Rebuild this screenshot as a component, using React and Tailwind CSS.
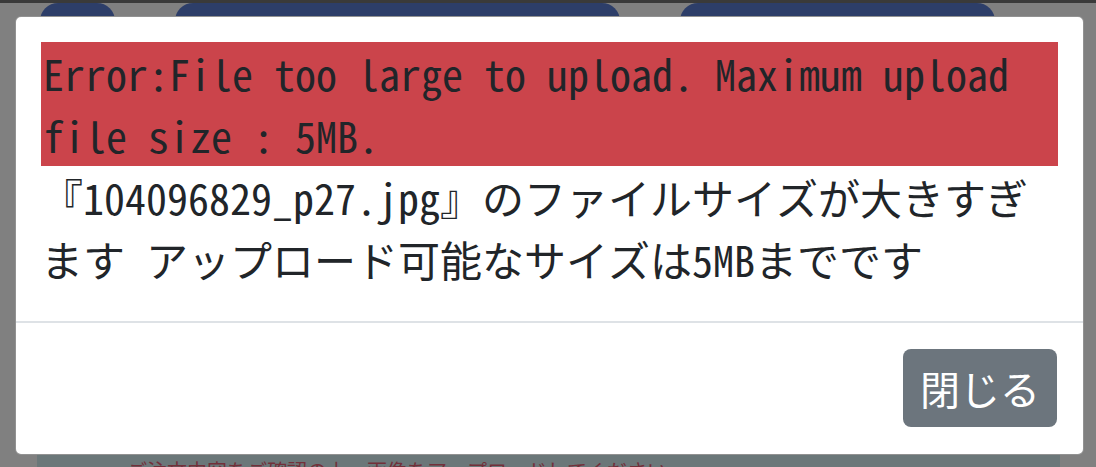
import React from "react";

const jpFont = {
  fontFamily: '"Noto Sans Mono CJK JP", "Noto Sans CJK JP", "DejaVu Sans Mono", monospace',
};

// ================= Page behind the overlay =================
const BackgroundPage = () => (
  <div className="absolute inset-0 flex flex-col bg-[#808080]">
    <div className="h-[3px] bg-[#3a3a3a]" />
    <div className="flex h-[60px] gap-[60px] pl-[40px]">
      <div className="w-[75px] rounded-t-[18px] bg-[#2d3e69]" />
      <div className="w-[445px] rounded-t-[18px] bg-[#2d3e69]" />
      <div className="w-[315px] rounded-t-[18px] bg-[#2d3e69]" />
    </div>
    <div className="flex-1" />
    <div className="ml-[37px] mr-[36px] h-[14px] bg-[#6b7779] overflow-hidden">
      <div className="pl-[90px] pt-[8px] text-[20px] leading-none text-[#72303a]" style={jpFont}>
        ご注文内容をご確認の上、画像をアップロードしてください
      </div>
    </div>
  </div>
);

// ================= Modal =================
const ErrorModal = () => (
  <div
    className="absolute left-[15px] top-[16px] w-[1069px] h-[439px] bg-white rounded-[6px] border border-[#4a4a4a]/60 flex flex-col text-[#212529]"
    style={jpFont}
  >
    <div className="px-[25px] pt-[25px] pb-[31px] text-[42px] leading-[62px]">
      <div className="bg-[#cb444b] pl-[2px]">
        Error:File too large to upload. Maximum upload file size : 5MB.
      </div>
      <div>『104096829_p27.jpg』のファイルサイズが大きすぎます アップロード可能なサイズは5MBまでです</div>
    </div>
    <div className="border-t-2 border-[#dee2e6]" />
    <div className="flex flex-1 items-start justify-end px-[26px] pt-[26px]">
      <button className="w-[154px] h-[78px] rounded-[8px] bg-[#6c757d] text-white text-[40px] leading-none flex items-center justify-center">
        閉じる
      </button>
    </div>
  </div>
);

export default function App() {
  return (
    <div className="relative w-full h-[467px] overflow-hidden">
      <BackgroundPage />
      <ErrorModal />
    </div>
  );
}
